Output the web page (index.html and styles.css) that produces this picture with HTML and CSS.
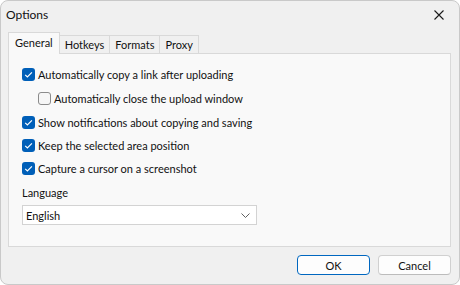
FILE: index.html
```html
<!DOCTYPE html>
<html lang="en">
<head>
  <meta charset="UTF-8">
  <meta name="viewport" content="width=device-width, initial-scale=1.0">
  <title>Options</title>
  <link rel="stylesheet" href="styles.css">
</head>
<body>
  <div class="janela">
    <div class="barra-titulo">
      <span class="titulo">Options</span>
      <svg class="fechar" width="10" height="10" viewBox="0 0 10 10">
        <path d="M0.5 0.5 L9.5 9.5 M9.5 0.5 L0.5 9.5" stroke="#1a1a1a" stroke-width="1.1" fill="none"/>
      </svg>
    </div>

    <div class="abas">
      <div class="aba ativa">General</div>
      <div class="aba">Hotkeys</div>
      <div class="aba">Formats</div>
      <div class="aba">Proxy</div>
    </div>

    <div class="painel">
      <label class="opcao">
        <span class="caixa marcada"><svg width="13" height="13" viewBox="0 0 13 13"><path d="M3.2 6.8 L5.4 9 L9.9 4.4" stroke="#fff" stroke-width="1.2" fill="none"/></svg></span>
        Automatically copy a link after uploading
      </label>
      <label class="opcao sub">
        <span class="caixa"></span>
        Automatically close the upload window
      </label>
      <label class="opcao">
        <span class="caixa marcada"><svg width="13" height="13" viewBox="0 0 13 13"><path d="M3.2 6.8 L5.4 9 L9.9 4.4" stroke="#fff" stroke-width="1.2" fill="none"/></svg></span>
        Show notifications about copying and saving
      </label>
      <label class="opcao">
        <span class="caixa marcada"><svg width="13" height="13" viewBox="0 0 13 13"><path d="M3.2 6.8 L5.4 9 L9.9 4.4" stroke="#fff" stroke-width="1.2" fill="none"/></svg></span>
        Keep the selected area position
      </label>
      <label class="opcao">
        <span class="caixa marcada"><svg width="13" height="13" viewBox="0 0 13 13"><path d="M3.2 6.8 L5.4 9 L9.9 4.4" stroke="#fff" stroke-width="1.2" fill="none"/></svg></span>
        Capture a cursor on a screenshot
      </label>

      <div class="rotulo">Language</div>
      <div class="seletor">
        <span>English</span>
        <svg width="9" height="5" viewBox="0 0 9 5"><path d="M0.5 0.5 L4.5 4.5 L8.5 0.5" stroke="#606060" stroke-width="1" fill="none"/></svg>
      </div>
    </div>

    <div class="rodape">
      <button class="botao principal">OK</button>
      <button class="botao">Cancel</button>
    </div>
  </div>
</body>
</html>
```

FILE: styles.css
```css
body {
  margin: 0;
  font-family: 'Lato', sans-serif;
  font-size: 11px;
  color: #111;
  background: #fff;
}
.janela {
  width: 460px;
  height: 285px;
  box-sizing: border-box;
  border: 1px solid #c9c9c9;
  border-radius: 8px;
  background: #f0f0f0;
  overflow: hidden;
}
.barra-titulo {
  height: 27px;
  display: flex;
  align-items: center;
  justify-content: space-between;
  padding: 0 15px 0 5px;
}
.titulo {
  font-size: 12px;
}
.abas {
  display: flex;
  align-items: flex-end;
  margin: 5px 0 0 7px;
  height: 20px;
}
.aba {
  height: 17px;
  line-height: 18px;
  padding: 0 5px;
  border: 1px solid #d9d9d9;
  border-bottom: none;
  border-left: none;
  background: #f0f0f0;
}
.aba.ativa {
  height: 21px;
  line-height: 19px;
  padding: 0 6px;
  border-left: 1px solid #d9d9d9;
  background: #f9f9f9;
  margin-bottom: -1px;
  position: relative;
  z-index: 1;
}
.painel {
  margin: 0 8px 0 7px;
  height: 194px;
  box-sizing: border-box;
  border: 1px solid #d9d9d9;
  background: #f9f9f9;
  padding: 9px 0 0 13px;
}
.opcao {
  display: flex;
  align-items: center;
  gap: 3px;
  height: 23px;
}
.opcao.sub {
  height: 25px;
  padding-left: 16px;
}
.caixa {
  width: 13px;
  height: 13px;
  box-sizing: border-box;
  border-radius: 3px;
  border: 1px solid #8b8b8b;
  background: #f6f6f6;
  flex-shrink: 0;
}
.caixa.marcada {
  border: none;
  background: #005fb8;
}
.caixa svg {
  display: block;
}
.rotulo {
  margin-top: 5px;
  height: 16px;
  line-height: 16px;
}
.seletor {
  margin-top: 4px;
  width: 235px;
  height: 20px;
  box-sizing: border-box;
  border: 1px solid #d3d3d3;
  background: #fff;
  display: flex;
  align-items: center;
  justify-content: space-between;
  padding: 0 6px 0 3px;
}
.seletor svg {
  display: block;
}
.rodape {
  display: flex;
  justify-content: flex-end;
  gap: 8px;
  margin: 8px 8px 0 0;
}
.botao {
  width: 73px;
  height: 20px;
  box-sizing: border-box;
  border: 1px solid #d0d0d0;
  border-bottom-color: #bcbcbc;
  border-radius: 4px;
  background: #fdfdfd;
  font-family: inherit;
  font-size: 11px;
  color: #111;
  padding: 0;
}
.botao.principal {
  border-color: #0067c0;
}
```
